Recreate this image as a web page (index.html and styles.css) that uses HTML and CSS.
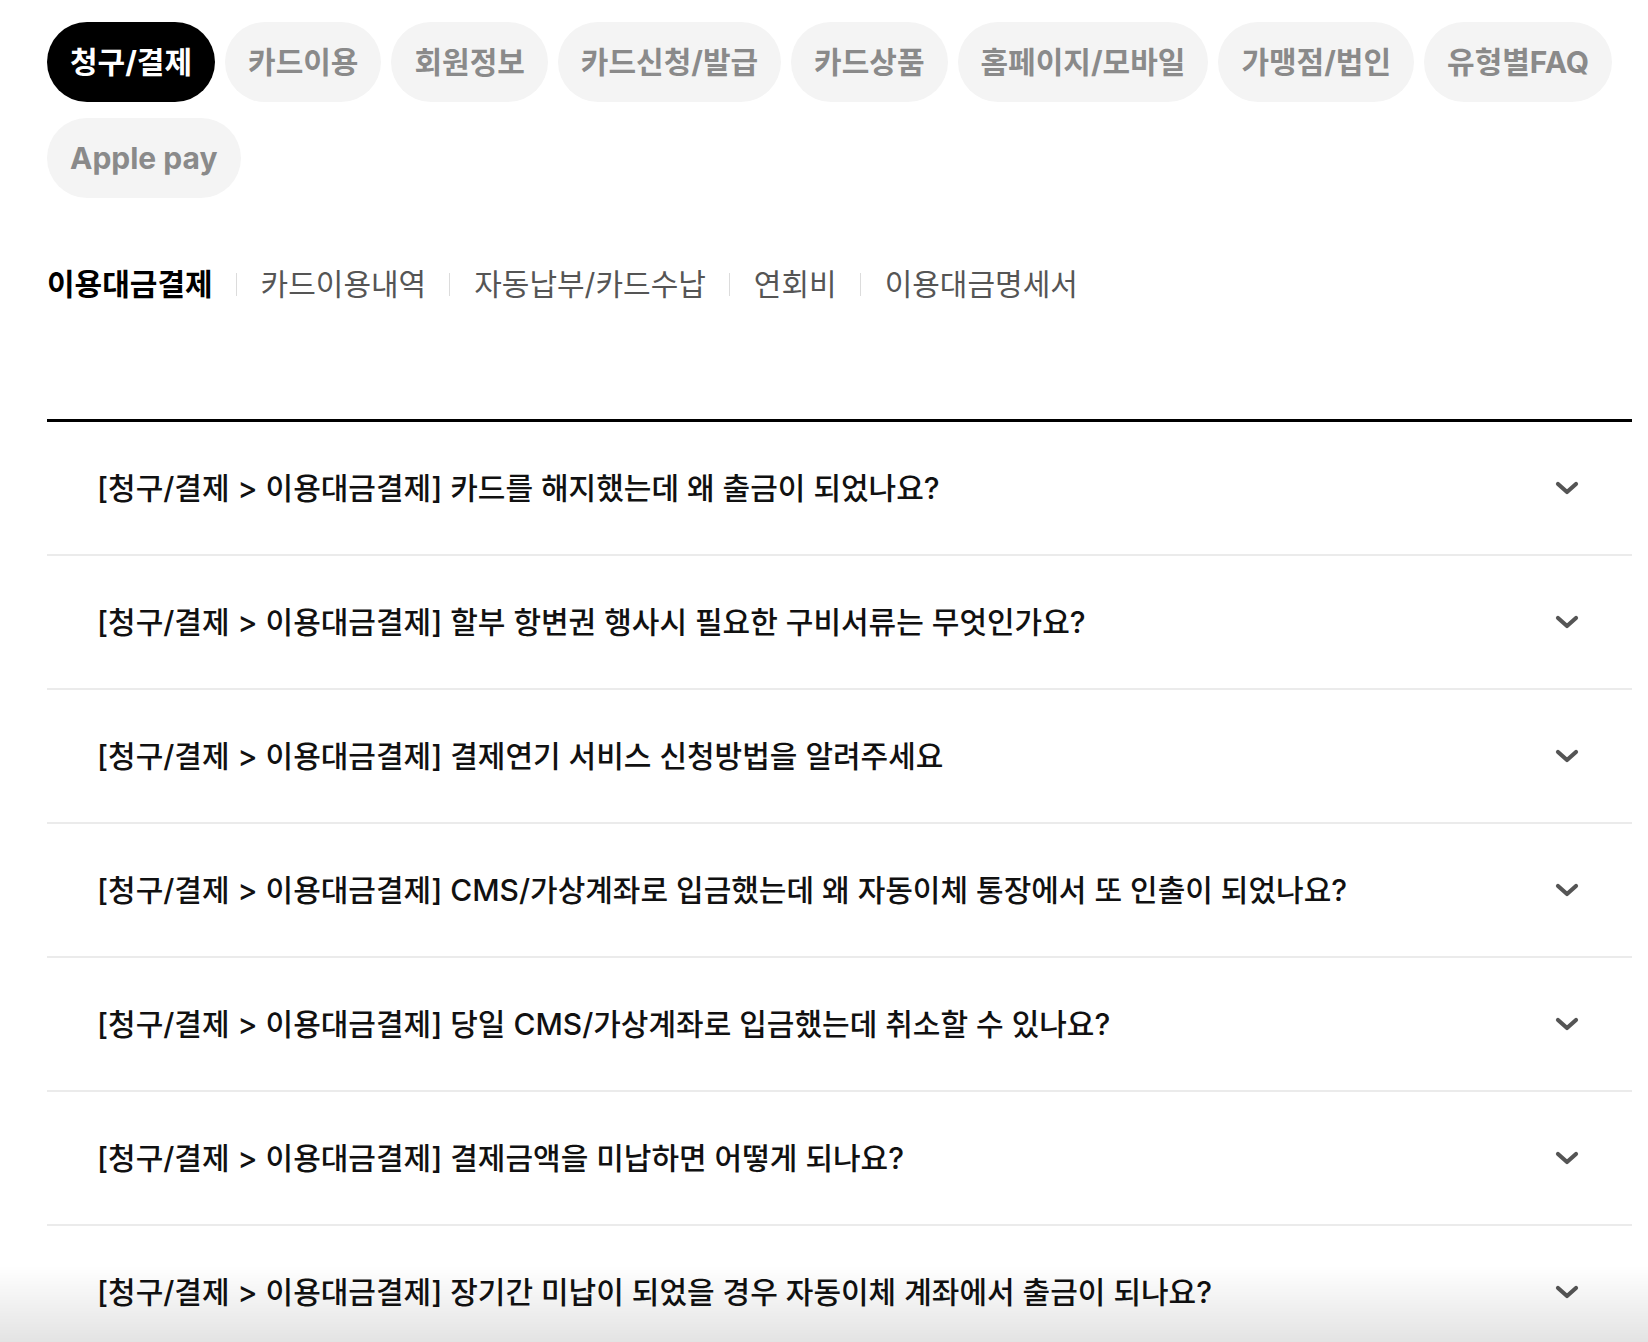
FILE: index.html
```html
<!DOCTYPE html>
<html lang="ko">
<head>
<meta charset="utf-8">
<title>FAQ</title>
<link rel="stylesheet" href="styles.css">
</head>
<body>
<div class="page">
  <ul class="cats">
    <li class="cat active">청구/결제</li>
    <li class="cat">카드이용</li>
    <li class="cat">회원정보</li>
    <li class="cat">카드신청/발급</li>
    <li class="cat">카드상품</li>
    <li class="cat">홈페이지/모바일</li>
    <li class="cat">가맹점/법인</li>
    <li class="cat">유형별FAQ</li>
    <li class="cat">Apple pay</li>
  </ul>

  <ul class="subs">
    <li class="sub active">이용대금결제</li>
    <li class="sub">카드이용내역</li>
    <li class="sub">자동납부/카드수납</li>
    <li class="sub">연회비</li>
    <li class="sub">이용대금명세서</li>
  </ul>

  <ul class="faq">
    <li class="q"><span class="q-text">[청구/결제 &gt; 이용대금결제] 카드를 해지했는데 왜 출금이 되었나요?</span><svg class="chev" viewBox="0 0 24 14" width="24" height="14"><path d="M3 3 L12 11 L21 3"/></svg></li>
    <li class="q"><span class="q-text">[청구/결제 &gt; 이용대금결제] 할부 항변권 행사시 필요한 구비서류는 무엇인가요?</span><svg class="chev" viewBox="0 0 24 14" width="24" height="14"><path d="M3 3 L12 11 L21 3"/></svg></li>
    <li class="q"><span class="q-text">[청구/결제 &gt; 이용대금결제] 결제연기 서비스 신청방법을 알려주세요</span><svg class="chev" viewBox="0 0 24 14" width="24" height="14"><path d="M3 3 L12 11 L21 3"/></svg></li>
    <li class="q"><span class="q-text">[청구/결제 &gt; 이용대금결제] CMS/가상계좌로 입금했는데 왜 자동이체 통장에서 또 인출이 되었나요?</span><svg class="chev" viewBox="0 0 24 14" width="24" height="14"><path d="M3 3 L12 11 L21 3"/></svg></li>
    <li class="q"><span class="q-text">[청구/결제 &gt; 이용대금결제] 당일 CMS/가상계좌로 입금했는데 취소할 수 있나요?</span><svg class="chev" viewBox="0 0 24 14" width="24" height="14"><path d="M3 3 L12 11 L21 3"/></svg></li>
    <li class="q"><span class="q-text">[청구/결제 &gt; 이용대금결제] 결제금액을 미납하면 어떻게 되나요?</span><svg class="chev" viewBox="0 0 24 14" width="24" height="14"><path d="M3 3 L12 11 L21 3"/></svg></li>
    <li class="q"><span class="q-text">[청구/결제 &gt; 이용대금결제] 장기간 미납이 되었을 경우 자동이체 계좌에서 출금이 되나요?</span><svg class="chev" viewBox="0 0 24 14" width="24" height="14"><path d="M3 3 L12 11 L21 3"/></svg></li>
  </ul>
</div>
<div class="fade"></div>
</body>
</html>
```

FILE: styles.css
```css
html, body {
  margin: 0;
  padding: 0;
  background: #fff;
}

body {
  font-family: Inter, "Noto Sans CJK KR", sans-serif;
  color: #000;
  overflow: hidden;
}

ul {
  list-style: none;
  margin: 0;
  padding: 0;
}

.page {
  padding: 22px 16px 0 47px;
}

/* category pills */
.cats {
  display: flex;
  flex-wrap: wrap;
  column-gap: 10px;
  row-gap: 16px;
}

.cat {
  height: 80px;
  line-height: 80px;
  padding: 0 23px;
  border-radius: 40px;
  background: #f4f4f4;
  color: #8a8a8a;
  font-size: 30px;
  font-weight: 700;
  white-space: nowrap;
}

.cat.active {
  background: #000;
  color: #fff;
}

/* sub navigation */
.subs {
  display: flex;
  align-items: center;
  margin-top: 66px;
}

.sub {
  display: flex;
  align-items: center;
  font-size: 30px;
  line-height: 40px;
  color: #555;
  font-weight: 400;
  white-space: nowrap;
}

.sub + .sub::before {
  content: "";
  width: 1px;
  height: 23px;
  background: #dcdcdc;
  margin: 0 24px 0 23px;
}

.sub.active {
  color: #000;
  font-weight: 700;
}

/* faq list */
.faq {
  margin-top: 115px;
  border-top: 3px solid #000;
}

.q {
  display: flex;
  align-items: center;
  justify-content: space-between;
  padding: 46px 53px 46px 50px;
  border-bottom: 2px solid #ebebeb;
  font-size: 30px;
  line-height: 40px;
  font-weight: 500;
  color: #111;
}

.chev {
  flex: none;
  fill: none;
  stroke: #555;
  stroke-width: 4.2;
  stroke-linecap: round;
  stroke-linejoin: round;
}

.fade {
  position: fixed;
  left: 0;
  right: 0;
  bottom: 0;
  height: 76px;
  background: linear-gradient(to bottom, rgba(0,0,0,0), rgba(0,0,0,0.11));
  pointer-events: none;
}
```
